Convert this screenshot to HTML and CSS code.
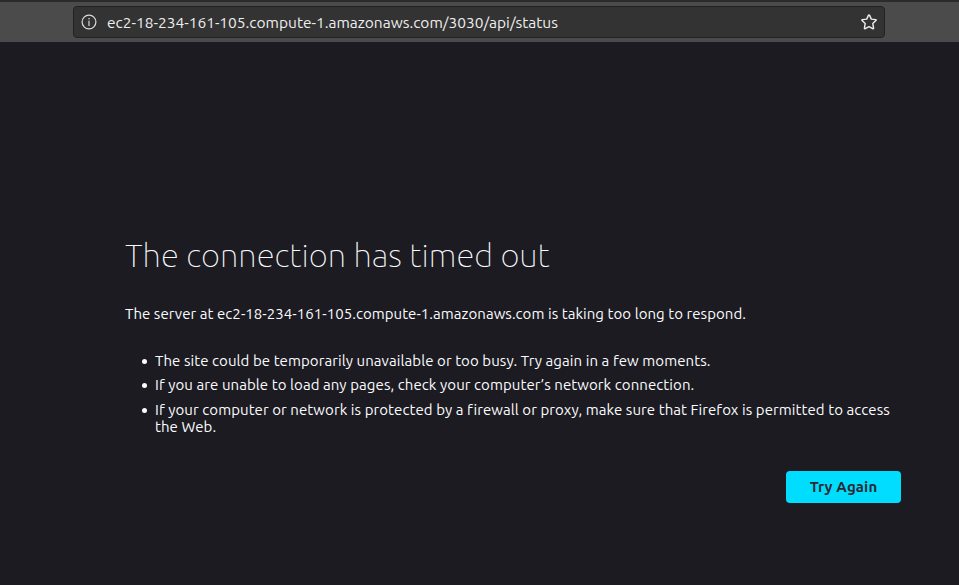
FILE: index.html
```
<!DOCTYPE html>
<html lang="en">
<head>
<meta charset="utf-8">
<title>Problem loading page</title>
<link rel="stylesheet" href="styles.css">
</head>
<body>
<header class="toolbar">
  <div class="urlbar">
    <svg class="info" viewBox="0 0 16 16" width="16" height="16"><circle cx="8" cy="8" r="6.9" fill="none" stroke="currentColor" stroke-width="1.2"/><circle cx="8" cy="4.800" r=".8" fill="currentColor"/><path d="M8 7v4.500" stroke="currentColor" stroke-width="1.200" stroke-linecap="round"/></svg>
    <span class="url">ec2-18-234-161-105.compute-1.amazonaws.com/3030/api/status</span>
    <svg class="star" viewBox="0 0 16 16" width="16" height="16"><path d="M8 .9q.4 0 .6.500l1.700 3.700 4.300.5q1 .2.300 1l-3.100 3 .8 4.500q0 1-.9.600L8 12.600l-3.700 2.100q-.9.400-.9-.6l.8-4.500-3.100-3q-.7-.8.300-1l4.300-.5 1.700-3.700q.2-.5.600-.5z" fill="none" stroke="currentColor" stroke-width="1.400" stroke-linejoin="round"/></svg>
  </div>
</header>
<main class="page">
  <h1>The connection has timed out</h1>
  <p>The server at ec2-18-234-161-105.compute-1.amazonaws.com is taking too long to respond.</p>
  <ul>
    <li>The site could be temporarily unavailable or too busy. Try again in a few moments.</li>
    <li>If you are unable to load any pages, check your computer’s network connection.</li>
    <li>If your computer or network is protected by a firewall or proxy, make sure that Firefox is permitted to access the Web.</li>
  </ul>
  <div class="actions"><button type="button">Try Again</button></div>
</main>
</body>
</html>
```
FILE: styles.css
```
* { box-sizing: border-box; }
body {
  margin: 0;
  height: 585px;
  overflow: hidden;
  background: #1c1b22;
  color: #fbfbfe;
  font-family: Ubuntu, "Noto Sans", sans-serif;
  font-size: 15px;
  line-height: 17px;
}
.toolbar {
  height: 42px;
  padding: 4px 74px 0 73px;
  background: #4b4b4b;
  border-top: 2px solid #2b2b2b;
}
.urlbar {
  display: flex;
  align-items: center;
  height: 32px;
  padding: 0 7px;
  background: #333;
  border: 1px solid #222;
  border-radius: 4px;
  color: #eee;
}
.info { color: #ddd; }
.url { flex: 1; margin-left: 10px; font-size: 15.500px; }
.page { margin-left: 125px; width: 776px; padding-top: 193px; }
h1 { margin: 0; font-size: 33px; font-weight: 100; line-height: 39px; letter-spacing: .01px; }
p { margin: 31px 0 0; letter-spacing: .06px; }
ul { margin: 30px 0 0; padding-left: 30px; letter-spacing: .078px; list-style: none; }
li { position: relative; margin-bottom: 7.400px; }
li::before {
  content: "";
  position: absolute;
  left: -13px;
  top: 7px;
  width: 5px;
  height: 5px;
  border-radius: 50%;
  background: currentColor;
}
.actions { display: flex; justify-content: flex-end; margin-top: 36px; }
button {
  width: 115px;
  height: 32px;
  padding: 0;
  border: 0;
  border-radius: 4px;
  background: #00ddff;
  color: #2b2a33;
  font: 700 15px/32px Ubuntu, "Noto Sans", sans-serif;
  letter-spacing: .12px;
}
```
